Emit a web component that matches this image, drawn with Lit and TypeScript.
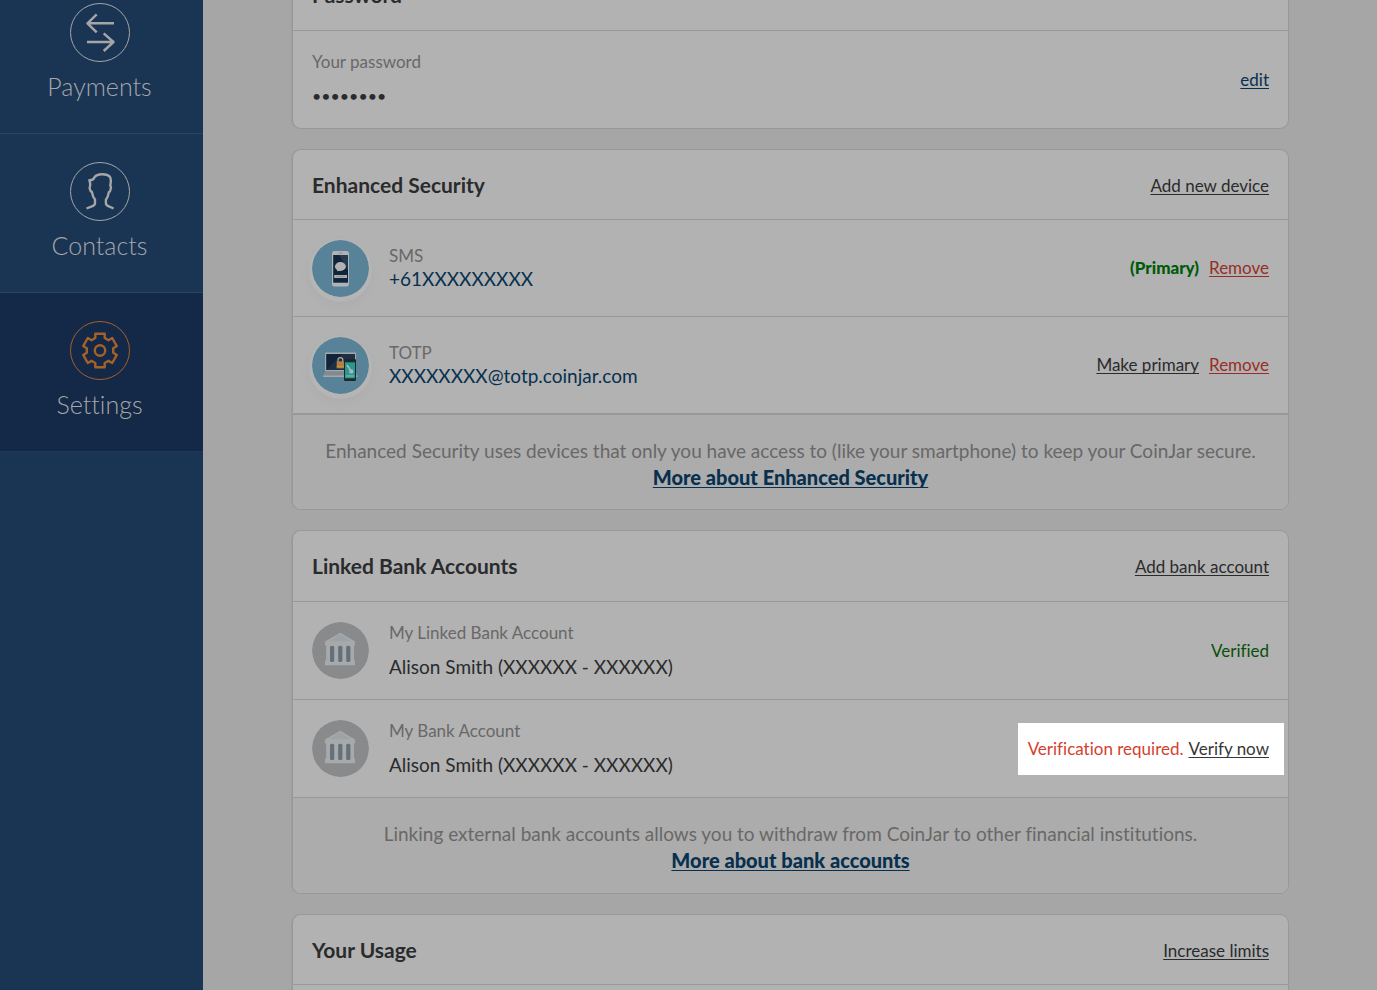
import { LitElement, html, css, svg } from "lit";
import { customElement } from "lit/decorators.js";
import { classMap } from "lit/directives/class-map.js";

const transferGlyph = svg`<path d="M44 20.3H17.5M26.7 11.3L17.5 20.3L26.7 29.3M17 39H43.5M33.7 30.3L43.5 39L33.7 48"/>`;
const personGlyph = svg`<path d="M16.5 46.5L22.5 44.2Q25 43.2 25 41V37.5Q22.6 34.8 22 30.2Q20.3 29.4 19.9 27Q19.2 25.6 20 24.3Q20.6 22 19.4 18.2Q23.4 18.4 24.4 15.4Q26.4 12.3 32 12.3Q38.6 12.3 40.4 15.8Q41.6 19 40.3 23.6Q41.6 25 40.6 27.4Q40.3 29.6 38.8 30.4Q38.2 35 35.9 37.8V41Q35.9 43.2 38.3 44.2L43.6 46.5"/>`;
const gearGlyph = svg`<g transform="translate(30 29.5)"><path d="M-4.7-16.7H4.7V-12.5L8.5-10.3L12.2-12.5L16.8-4.4L13.2-2.2V2.2L16.8 4.4L12.2 12.5L8.5 10.3L4.7 12.5V16.7H-4.7V12.5L-8.5 10.3L-12.2 12.5L-16.8 4.4L-13.2 2.2V-2.2L-16.8-4.4L-12.2-12.5L-8.5-10.3L-4.7-12.5Z"/><circle r="5.2"/></g>`;

const navItems = [
  { label: "Payments", glyph: transferGlyph, active: false },
  { label: "Contacts", glyph: personGlyph, active: false },
  { label: "Settings", glyph: gearGlyph, active: true },
];

const phoneBadge = html`<svg class="badge glow" viewBox="0 0 57 57" aria-hidden="true">
  <circle cx="28.5" cy="28.5" r="28.5" fill="#578298"/>
  <rect x="20" y="11" width="17" height="35.5" rx="2.5" fill="#b0b2b5"/>
  <rect x="21.2" y="15" width="14.8" height="27.7" fill="#10243a"/>
  <path d="M27 15H36V30Z" fill="#263b4f"/>
  <rect x="26.5" y="12.6" width="4" height="1" rx=".5" fill="#8a8d90"/>
  <ellipse cx="28.4" cy="26.5" rx="5.5" ry="4.4" fill="#b2b2b2"/>
  <path d="M25 28.5L25.2 31.2L28.5 30.5Z" fill="#b2b2b2"/>
  <rect x="22.2" y="35" width="12.8" height="3" fill="#aaaeb2"/>
  <rect x="24.5" y="36.2" width="8" height=".8" fill="#858a90"/>
</svg>`;

const laptopBadge = html`<svg class="badge glow" viewBox="0 0 57 57" aria-hidden="true">
  <circle cx="28.5" cy="28.5" r="28.5" fill="#578298"/>
  <rect x="13" y="15.5" width="31" height="19" rx="1" fill="#a4a8ab"/>
  <rect x="14.2" y="17" width="28.6" height="16" fill="#10243a"/>
  <path d="M14.2 33L30 17H42.8V33Z" fill="#1d2f42"/>
  <path d="M13 34.5H44L45.5 39.5H11.2Z" fill="#85898d"/>
  <path d="M11.2 38.5H45.5V40H11.2Z" fill="#a4a8ab"/>
  <path d="M26 25V22.8Q26 20.6 28.4 20.6Q30.8 20.6 30.8 22.8V25" fill="none" stroke="#aaa" stroke-width="1.2"/>
  <rect x="24.7" y="24.3" width="7.3" height="7" fill="#b3803c"/>
  <rect x="24.7" y="29" width="7.3" height="1" fill="#c3904a"/>
  <rect x="32" y="22" width="12" height="22" rx="1.2" fill="#20272b"/>
  <rect x="33" y="25.3" width="10" height="16" fill="#249a90"/>
  <path d="M35 28L39 34" stroke="#a7b8b8" stroke-width="1.6"/>
  <circle cx="39.3" cy="34.4" r="2.2" fill="#a7b8b8"/>
  <rect x="34.2" y="38" width="7.6" height="2" fill="#68aaa5"/>
</svg>`;

const bankBadge = html`<svg class="badge" viewBox="0 0 57 57" aria-hidden="true">
  <circle cx="28.5" cy="28.5" r="28.5" fill="#898a8c"/>
  <path d="M28.3 10.7L43 19.6V23.5H42V38.5H43V43.2H13V38.5H14.2V23.5H13V19.6Z" fill="#a6aaac"/>
  <path d="M28.3 12.5L39.5 19.3H17Z" fill="#9ba3a8"/>
  <path d="M13 20.6H43V22H13Z" fill="#a9a8a5"/>
  <rect x="18" y="23.7" width="4.2" height="16.4" rx="1.5" fill="#667078"/>
  <rect x="26.2" y="23.7" width="4.2" height="16.4" rx="1.5" fill="#667078"/>
  <rect x="34.2" y="23.7" width="4.2" height="16.4" rx="1.5" fill="#667078"/>
</svg>`;

@customElement("app-root")
export class AppRoot extends LitElement {
  static styles = css`
    :host {
      display: grid;
      grid-template-columns: 203px minmax(0, 1fr);
      height: 100vh;
      overflow: hidden;
      background: #a6a6a6;
      color: #2a2b2c;
      font-family: Lato, "Open Sans", sans-serif;
      font-size: 17px;
      font-variant-ligatures: none;
      line-height: 24px;
    }
    * { box-sizing: border-box; }
    a { color: inherit; text-underline-offset: 2px; text-decoration-thickness: 1px; text-decoration-skip-ink: none; }
    .sidebar { background: #1a3454; overflow: hidden; }
    .menu { margin-top: -25px; }
    .item {
      display: flex;
      flex-direction: column;
      align-items: center;
      gap: 7px;
      height: 159px;
      padding: 28px 4px 0 0;
      border-bottom: 1px solid #2a4464;
      color: #a5a7a8;
      font-size: 25px;
      font-weight: 300;
      line-height: 34px;
      text-decoration: none;
    }
    .item.active { background: #142847; border-bottom-color: #1c3656; }
    .item svg { width: 60px; height: 59px; fill: none; stroke: #a6a6a6; stroke-width: 2.4; stroke-linejoin: round; }
    .item.active svg { stroke: #a5612a; }
    .item .ring { stroke-width: 1; }
    .content { overflow: hidden; padding: 0 88px 0 89px; }
    .cards { display: flex; flex-direction: column; gap: 20px; margin-top: -41px; }
    .card { border: 1px solid #989898; border-radius: 9px; background: #b2b2b2; box-shadow: -1px 0 0 #9e9e9e; overflow: hidden; }
    .head, .row { display: flex; align-items: center; border-bottom: 1px solid #989898; padding: 0 19px; }
    .head { height: 70px; justify-content: space-between; }
    .head a { padding-top: 2px; }
    .head.tall { height: 71px; }
    .row { min-height: 97px; gap: 20px; }
    .row.tall { min-height: 98px; }
    .row.last { border-bottom: 0; }
    .row.thick { min-height: 98px; border-bottom-width: 2px; }
    h2 { margin: 0; font-size: 21px; line-height: 24px; font-weight: 700; }
    .badge { flex: none; width: 57px; height: 57px; border-radius: 50%; }
    .glow { box-shadow: 0 2px 0 3px #b5b5b5, 0 6px 8px 3px #adadad; }
    .info { flex: 1; display: flex; flex-direction: column; min-width: 0; padding-bottom: 2px; line-height: 23px; }
    .info.loose { gap: 11px; }
    .label { color: #686868; }
    .id { color: #07304f; font-size: 19px; }
    .name { font-size: 19px; }
    .dots { font-size: 16px; }
    .blue { color: #07304f; }
    .actions { display: flex; gap: 10px; }
    .remove { color: #982d25; }
    .primary { color: #005a0a; font-weight: 900; }
    .verified { color: #0a500c; }
    .notice { display: flex; align-items: center; gap: 5px; height: 52px; margin-right: -15px; padding: 0 15px 0 10px; background: #fff; color: #373737; }
    .notice .warning { color: #d5402f; }
    .foot { padding: 23px 10px 19px; background: #acacac; color: #686868; font-size: 19px; line-height: 26px; text-align: center; }
    .foot p { margin: 0; }
    .foot a { color: #07304f; font-size: 20px; font-weight: 900; }
    .foot.short { padding-bottom: 18px; }
    .body { height: 97px; }
  `;

  render() {
    return html`
      <aside class="sidebar">
        <nav class="menu">
          ${navItems.map((n) => html`<a class=${classMap({ item: true, active: n.active })} href="#">
            <svg viewBox="0 0 60 59" aria-hidden="true"><ellipse class="ring" cx="30" cy="29.5" rx="29.5" ry="29"/>${n.glyph}</svg>
            <span>${n.label}</span>
          </a>`)}
        </nav>
      </aside>
      <main class="content">
        <div class="cards">
          <section class="card">
            <div class="head tall"><h2>Password</h2></div>
            <div class="row last">
              <div class="info loose"><span class="label">Your password</span><span class="dots">••••••••</span></div>
              <a class="blue" href="#">edit</a>
            </div>
          </section>
          <section class="card">
            <div class="head"><h2>Enhanced Security</h2><a href="#">Add new device</a></div>
            <div class="row">
              ${phoneBadge}
              <div class="info"><span class="label">SMS</span><span class="id">+61XXXXXXXXX</span></div>
              <div class="actions"><span class="primary">(Primary)</span><a class="remove" href="#">Remove</a></div>
            </div>
            <div class="row thick">
              ${laptopBadge}
              <div class="info"><span class="label">TOTP</span><span class="id">XXXXXXXX@totp.coinjar.com</span></div>
              <div class="actions"><a href="#">Make primary</a><a class="remove" href="#">Remove</a></div>
            </div>
            <div class="foot short">
              <p>Enhanced Security uses devices that only you have access to (like your smartphone) to keep your CoinJar secure.</p>
              <a href="#">More about Enhanced Security</a>
            </div>
          </section>
          <section class="card">
            <div class="head tall"><h2>Linked Bank Accounts</h2><a href="#">Add bank account</a></div>
            <div class="row tall">
              ${bankBadge}
              <div class="info loose"><span class="label">My Linked Bank Account</span><span class="name">Alison Smith (XXXXXX - XXXXXX)</span></div>
              <span class="verified">Verified</span>
            </div>
            <div class="row tall">
              ${bankBadge}
              <div class="info loose"><span class="label">My Bank Account</span><span class="name">Alison Smith (XXXXXX - XXXXXX)</span></div>
              <div class="notice"><span class="warning">Verification required.</span><a href="#">Verify now</a></div>
            </div>
            <div class="foot">
              <p>Linking external bank accounts allows you to withdraw from CoinJar to other financial institutions.</p>
              <a href="#">More about bank accounts</a>
            </div>
          </section>
          <section class="card">
            <div class="head"><h2>Your Usage</h2><a href="#">Increase limits</a></div>
            <div class="body"></div>
          </section>
        </div>
      </main>
    `;
  }
}
